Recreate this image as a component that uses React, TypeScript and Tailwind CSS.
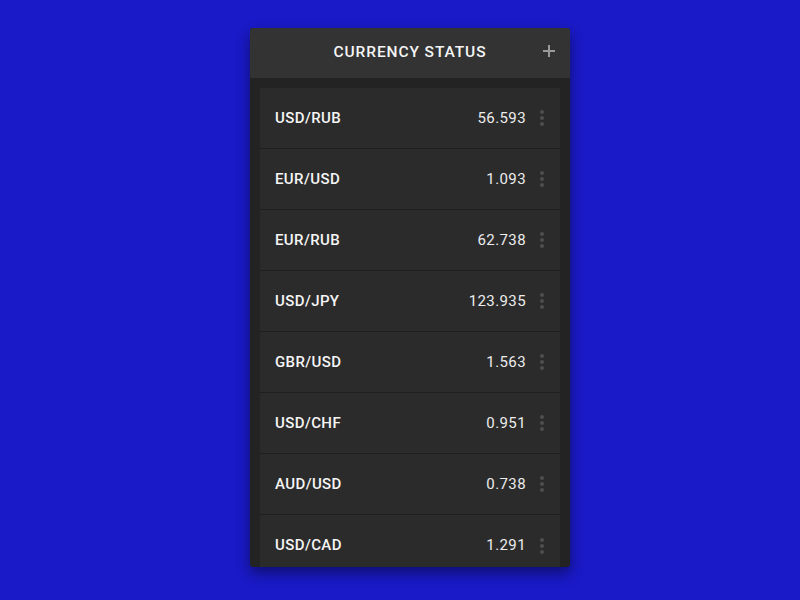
import React from "react";

const rows: [string, string][] = [
  ["USD/RUB", "56.593"],
  ["EUR/USD", "1.093"],
  ["EUR/RUB", "62.738"],
  ["USD/JPY", "123.935"],
  ["GBR/USD", "1.563"],
  ["USD/CHF", "0.951"],
  ["AUD/USD", "0.738"],
  ["USD/CAD", "1.291"],
];

function Dots() {
  return (
    <div className="flex flex-col items-center gap-[2px] w-[4px]">
      <span className="block w-[4px] h-[4px] rounded-full bg-[#4e4e4e]" />
      <span className="block w-[4px] h-[4px] rounded-full bg-[#4e4e4e]" />
      <span className="block w-[4px] h-[4px] rounded-full bg-[#4e4e4e]" />
    </div>
  );
}

export default function App() {
  return (
    <div
      className="w-[800px] h-[600px] bg-[#1a1ac8] flex justify-center pt-[28px] pl-[20px]"
      style={{ fontFamily: "Roboto, 'Noto Sans', sans-serif" }}
    >
      <div className="w-[320px] h-[539px] rounded-[3px] overflow-hidden bg-[#232323] shadow-[0_6px_14px_rgba(0,0,0,0.45)] flex flex-col">
        <div className="h-[50px] shrink-0 bg-[#333333] relative flex items-center justify-center">
          <span className="text-[15.5px] font-medium tracking-[0.9px] text-[#f5f5f5]">
            CURRENCY STATUS
          </span>
          <svg
            className="absolute right-[15px] top-[17px]"
            width="12"
            height="12"
            viewBox="0 0 12 12"
          >
            <rect x="5" y="0" width="2" height="12" fill="#9a9a9a" />
            <rect x="0" y="5" width="12" height="2" fill="#9a9a9a" />
          </svg>
        </div>
        <div className="px-[10px] pt-[10px] flex-1 overflow-hidden">
          <div className="bg-[#2b2b2b]">
            {rows.map(([pair, val], i) => (
              <div
                key={pair}
                className={
                  "h-[61px] flex items-center pl-[15px] pr-[16px] " +
                  (i < rows.length - 1 ? "border-b border-[#1f1f1f]" : "")
                }
              >
                <span className="text-[15px] font-medium text-[#f5f5f5] tracking-[0.4px]">
                  {pair}
                </span>
                <span className="ml-auto text-[15px] text-[#ececec] tracking-[0.4px]">
                  {val}
                </span>
                <div className="ml-[14px]">
                  <Dots />
                </div>
              </div>
            ))}
          </div>
        </div>
      </div>
    </div>
  );
}
